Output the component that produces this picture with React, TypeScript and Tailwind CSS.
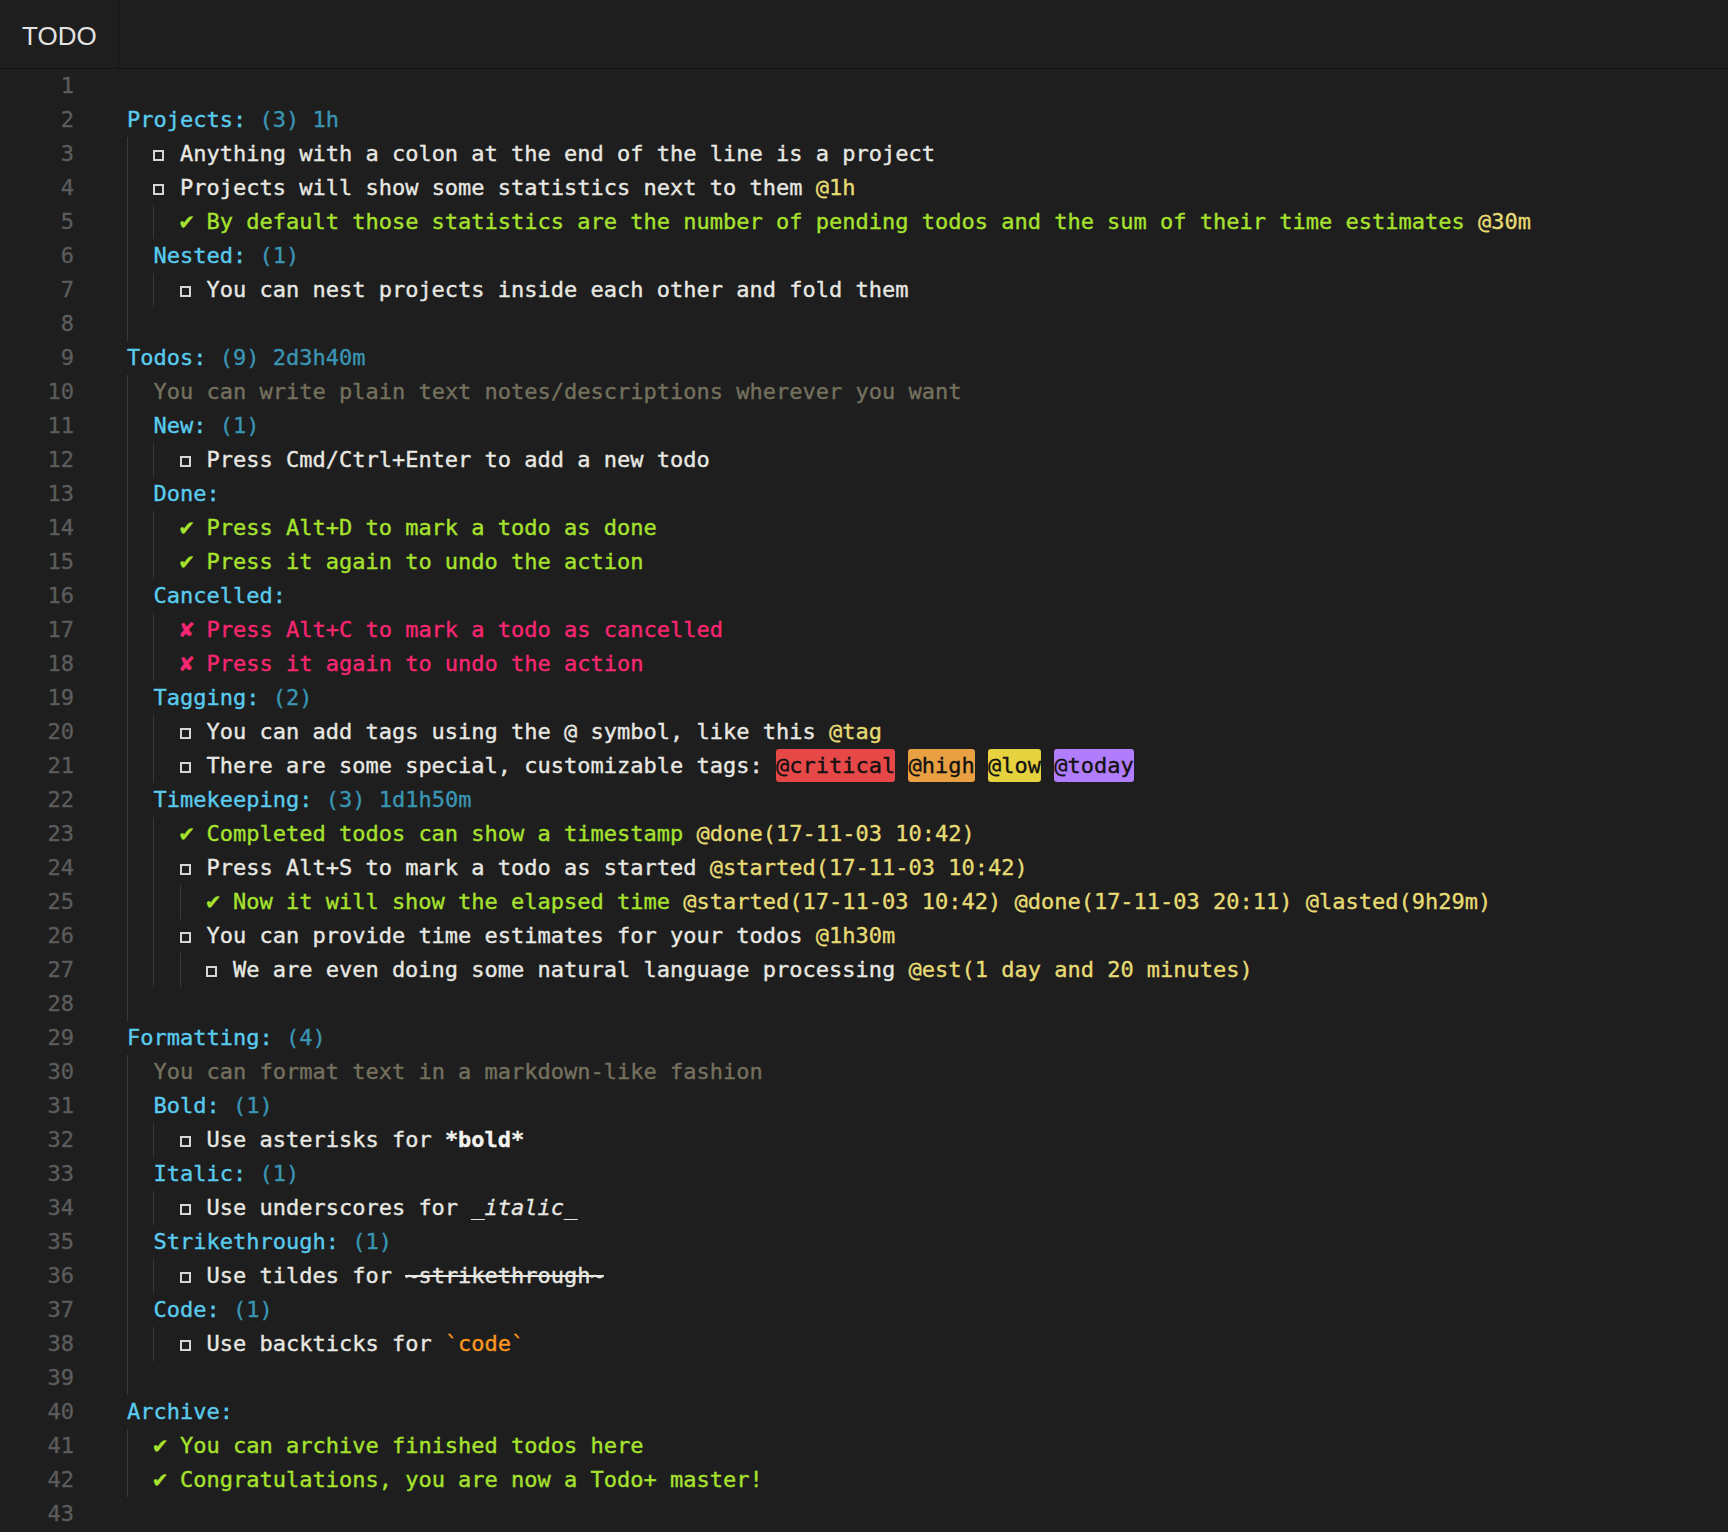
import React from "react";

type Seg = { t: string; c?: string };
type Line = { lvl: number; mark?: "box" | "done" | "cancel"; segs: Seg[] };

const proj = "text-[#5acbee]";
const stats = "text-[#3a95b3]";
const body = "text-[#e8e8e3]";
const done = "text-[#a6e22e]";
const cancel = "text-[#f92672]";
const tag = "text-[#e6db74]";
const comment = "text-[#75715e]";
const code = "text-[#fd971f]";

const blank = (lvl: number): Line => ({ lvl, segs: [] });
const project = (lvl: number, name: string, s?: string): Line => ({
  lvl,
  segs: s ? [{ t: name, c: proj }, { t: " " + s, c: stats }] : [{ t: name, c: proj }],
});

const lines: Line[] = [
  blank(0),
  project(0, "Projects:", "(3) 1h"),
  { lvl: 1, mark: "box", segs: [{ t: "Anything with a colon at the end of the line is a project", c: body }] },
  { lvl: 1, mark: "box", segs: [{ t: "Projects will show some statistics next to them ", c: body }, { t: "@1h", c: tag }] },
  {
    lvl: 2,
    mark: "done",
    segs: [
      { t: "By default those statistics are the number of pending todos and the sum of their time estimates ", c: done },
      { t: "@30m", c: tag },
    ],
  },
  project(1, "Nested:", "(1)"),
  { lvl: 2, mark: "box", segs: [{ t: "You can nest projects inside each other and fold them", c: body }] },
  blank(1),
  project(0, "Todos:", "(9) 2d3h40m"),
  { lvl: 1, segs: [{ t: "You can write plain text notes/descriptions wherever you want", c: comment }] },
  project(1, "New:", "(1)"),
  { lvl: 2, mark: "box", segs: [{ t: "Press Cmd/Ctrl+Enter to add a new todo", c: body }] },
  project(1, "Done:"),
  { lvl: 2, mark: "done", segs: [{ t: "Press Alt+D to mark a todo as done", c: done }] },
  { lvl: 2, mark: "done", segs: [{ t: "Press it again to undo the action", c: done }] },
  project(1, "Cancelled:"),
  { lvl: 2, mark: "cancel", segs: [{ t: "Press Alt+C to mark a todo as cancelled", c: cancel }] },
  { lvl: 2, mark: "cancel", segs: [{ t: "Press it again to undo the action", c: cancel }] },
  project(1, "Tagging:", "(2)"),
  { lvl: 2, mark: "box", segs: [{ t: "You can add tags using the @ symbol, like this ", c: body }, { t: "@tag", c: tag }] },
  {
    lvl: 2,
    mark: "box",
    segs: [
      { t: "There are some special, customizable tags: ", c: body },
      { t: "@critical", c: "rounded-[3px] bg-[#e64848] text-[#111111] h-[33px] leading-[33px]" },
      { t: " " },
      { t: "@high", c: "rounded-[3px] bg-[#e8a042] text-[#111111] h-[33px] leading-[33px]" },
      { t: " " },
      { t: "@low", c: "rounded-[3px] bg-[#e6d13f] text-[#111111] h-[33px] leading-[33px]" },
      { t: " " },
      { t: "@today", c: "rounded-[3px] bg-[#b17dfc] text-[#111111] h-[33px] leading-[33px]" },
    ],
  },
  project(1, "Timekeeping:", "(3) 1d1h50m"),
  {
    lvl: 2,
    mark: "done",
    segs: [{ t: "Completed todos can show a timestamp ", c: done }, { t: "@done(17-11-03 10:42)", c: tag }],
  },
  {
    lvl: 2,
    mark: "box",
    segs: [{ t: "Press Alt+S to mark a todo as started ", c: body }, { t: "@started(17-11-03 10:42)", c: tag }],
  },
  {
    lvl: 3,
    mark: "done",
    segs: [
      { t: "Now it will show the elapsed time ", c: done },
      { t: "@started(17-11-03 10:42) @done(17-11-03 20:11) @lasted(9h29m)", c: tag },
    ],
  },
  {
    lvl: 2,
    mark: "box",
    segs: [{ t: "You can provide time estimates for your todos ", c: body }, { t: "@1h30m", c: tag }],
  },
  {
    lvl: 3,
    mark: "box",
    segs: [
      { t: "We are even doing some natural language processing ", c: body },
      { t: "@est(1 day and 20 minutes)", c: tag },
    ],
  },
  blank(1),
  project(0, "Formatting:", "(4)"),
  { lvl: 1, segs: [{ t: "You can format text in a markdown-like fashion", c: comment }] },
  project(1, "Bold:", "(1)"),
  { lvl: 2, mark: "box", segs: [{ t: "Use asterisks for ", c: body }, { t: "*bold*", c: "font-bold text-[#f2f2ee]" }] },
  project(1, "Italic:", "(1)"),
  {
    lvl: 2,
    mark: "box",
    segs: [
      { t: "Use underscores for _", c: body },
      { t: "italic", c: "italic text-[#e8e8e3]" },
      { t: "_", c: body },
    ],
  },
  project(1, "Strikethrough:", "(1)"),
  {
    lvl: 2,
    mark: "box",
    segs: [{ t: "Use tildes for ", c: body }, { t: "~strikethrough~", c: "line-through text-[#e8e8e3]" }],
  },
  project(1, "Code:", "(1)"),
  { lvl: 2, mark: "box", segs: [{ t: "Use backticks for ", c: body }, { t: "`code`", c: code }] },
  blank(1),
  project(0, "Archive:"),
  { lvl: 1, mark: "done", segs: [{ t: "You can archive finished todos here", c: done }] },
  { lvl: 1, mark: "done", segs: [{ t: "Congratulations, you are now a Todo+ master!", c: done }] },
  blank(0),
];

function Marker({ kind }: { kind: Line["mark"] }) {
  if (kind === "box") {
    return (
      <span className="flex w-[1ch] shrink-0 items-center">
        <span className="mt-[3px] h-[11px] w-[11px] border-2 border-[#d6d6d6]" />
      </span>
    );
  }
  const color = kind === "done" ? "text-[#a6e22e]" : "text-[#f92672]";
  return (
    <span className="flex w-[1ch] min-w-0 shrink-0 justify-center overflow-visible">
      <span className={`font-['DejaVu_Sans'] text-[20px] font-bold ${color}`}>
        {kind === "done" ? "✔" : "✘"}
      </span>
    </span>
  );
}

export default function App() {
  return (
    <div className="min-h-screen bg-[#1e1e1e]">
      <div className="flex h-[69px] border-b border-[#141414]">
        <div className="flex w-[119px] items-center border-r border-[#141414] pl-[22px] pt-[4px] font-['Liberation_Sans',sans-serif] text-[26px] text-[#e2e2e2]">
          TODO
        </div>
      </div>

      <div className="font-['DejaVu_Sans_Mono',monospace] text-[22px] [-webkit-text-stroke:0.35px_currentColor]">
        {lines.map((line, i) => (
          <div key={i} className="flex h-[34px] leading-[34px]">
            <div className="w-[74px] shrink-0 text-right text-[#5c5c5c]">{i + 1}</div>
            <div className="flex whitespace-pre pl-[53px]">
              {Array.from({ length: line.lvl }).map((_, k) => (
                <span key={k} className="w-[2ch] shrink-0 border-l border-[#3a3a3a]" />
              ))}
              {line.mark && (
                <>
                  <Marker kind={line.mark} />
                  <span> </span>
                </>
              )}
              {line.segs.map((s, k) => (
                <span key={k} className={s.c}>
                  {s.t}
                </span>
              ))}
            </div>
          </div>
        ))}
      </div>
    </div>
  );
}
